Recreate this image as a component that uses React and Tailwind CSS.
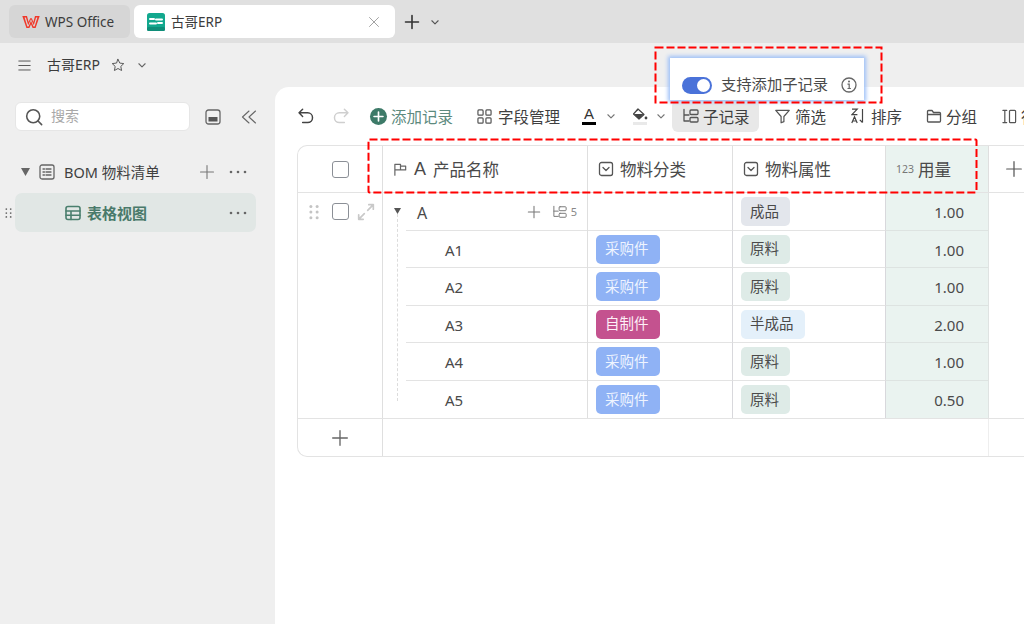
import { useState } from "react";

const FONT = "font-['Noto_Sans','Noto_Sans_CJK_SC',sans-serif]";

const rows = [
  { name: "A", kind: null, attr: "成品", attrClass: "bg-[#e3e6ec]", qty: "1.00", parent: true },
  { name: "A1", kind: "采购件", attr: "原料", attrClass: "bg-[#deebe7]", qty: "1.00" },
  { name: "A2", kind: "采购件", attr: "原料", attrClass: "bg-[#deebe7]", qty: "1.00" },
  { name: "A3", kind: "自制件", attr: "半成品", attrClass: "bg-[#e4f0fa]", qty: "2.00" },
  { name: "A4", kind: "采购件", attr: "原料", attrClass: "bg-[#deebe7]", qty: "1.00" },
  { name: "A5", kind: "采购件", attr: "原料", attrClass: "bg-[#deebe7]", qty: "0.50", last: true },
];

function Icon({ size = 16, children, className = "", stroke = "currentColor", sw = 1.3 }) {
  return (
    <svg width={size} height={size} viewBox="0 0 16 16" fill="none" stroke={stroke} strokeWidth={sw} strokeLinecap="round" strokeLinejoin="round" className={`shrink-0 ${className}`}>
      {children}
    </svg>
  );
}

const Plus = ({ size = 16, className = "", sw = 1.2 }) => (
  <Icon size={size} className={className} sw={sw}><path d="M8 1.5v13M1.5 8h13" /></Icon>
);
const Chevron = ({ size = 10, className = "" }) => (
  <Icon size={size} className={className} sw={1.8}><path d="M3 6l5 5 5-5" /></Icon>
);
const Dots = ({ className = "" }) => (
  <svg width="18" height="4" viewBox="0 0 18 4" className={`shrink-0 ${className}`} fill="currentColor">
    <circle cx="2" cy="2" r="1.3" /><circle cx="9" cy="2" r="1.3" /><circle cx="16" cy="2" r="1.3" />
  </svg>
);
const Grip = ({ className = "", r = 1.1, w = 8, h = 12 }) => (
  <svg width={w} height={h} viewBox="0 0 8 12" className={`shrink-0 ${className}`} fill="currentColor">
    {[1.5, 6, 10.5].map((y) => (
      <g key={y}><circle cx="1.5" cy={y} r={r} /><circle cx="6.5" cy={y} r={r} /></g>
    ))}
  </svg>
);
const SubRecord = ({ size = 16, className = "", sw = 1.3 }) => (
  <Icon size={size} className={className} sw={sw}>
    <path d="M1 1.5v11.5h5M1 7h5" />
    <rect x="7" y="2" width="8" height="4.5" rx="1" />
    <rect x="7" y="9.5" width="8" height="4.5" rx="1" />
  </Icon>
);
const SelectBox = () => (
  <Icon size={16} className="text-[#555]" sw={1.3}>
    <rect x="1.5" y="1.5" width="13" height="13" rx="2" />
    <path d="M5 6.5l3 3 3-3" />
  </Icon>
);
const Check = () => <div className="w-[17px] h-[17px] rounded-[3px] border-[1.5px] border-[#8b8f96] bg-white shrink-0" />;

function Tag({ className, children }) {
  return <span className={`inline-flex items-center h-[29px] mt-[1px] pl-[9px] pr-[11px] rounded-[5px] text-[14.5px] ${className}`}>{children}</span>;
}

function ToolItem({ icon, label, className = "", textClass = "" }) {
  return (
    <div className={`flex items-center shrink-0 ${className}`}>
      {icon}
      <span className={`text-[15.5px] leading-none pt-[3px] whitespace-nowrap ${textClass}`}>{label}</span>
    </div>
  );
}

function Toolbar() {
  return (
    <div className="flex items-center h-[32px] mt-[13px] ml-[22px] text-[#3f3f3f]">
      <Icon size={18} className="text-[#444]" sw={1.3}>
        <path d="M5 2L1.8 5.2 5 8.4M2 5.2h7.5a4.3 4.3 0 010 8.6H5" />
      </Icon>
      <Icon size={18} className="ml-[17px] text-[#cfcfcf]" sw={1.3}>
        <path d="M11 2l3.2 3.2L11 8.4M14 5.2H6.5a4.3 4.3 0 000 8.6H11" />
      </Icon>
      <ToolItem
        className="ml-[20px]"
        textClass="text-[#5d8a7e] ml-[4px]"
        label="添加记录"
        icon={
          <div className="w-[17px] h-[17px] rounded-full bg-[#3d7a68] flex items-center justify-center text-white">
            <Plus size={11} sw={2.4} />
          </div>
        }
      />
      <ToolItem
        className="ml-[24px]"
        textClass="ml-[6px]"
        label="字段管理"
        icon={
          <Icon size={15} className="text-[#555]" sw={1.3}>
            <rect x="1" y="1" width="5.5" height="5.5" rx="1" /><rect x="9.5" y="1" width="5.5" height="5.5" rx="1" />
            <rect x="1" y="9.5" width="5.5" height="5.5" rx="1" /><rect x="9.5" y="9.5" width="5.5" height="5.5" rx="1" />
          </Icon>
        }
      />
      <div className="ml-[22px] w-[14px] flex flex-col items-center shrink-0">
        <span className="text-[15px] leading-[14px] font-['Liberation_Sans',sans-serif] text-[#333]">A</span>
        <div className="w-[14px] h-[3px] bg-black mt-[1px]" />
      </div>
      <Chevron className="ml-[10px] text-[#777]" />
      <div className="ml-[16px] w-[16px] flex flex-col items-center shrink-0">
        <svg width="16" height="13" viewBox="0 0 16 13" className="shrink-0">
          <path d="M6 1l6 5.5-5 4.5-5.5-5z" fill="#fff" stroke="#444" strokeWidth="1.2" strokeLinejoin="round" />
          <path d="M2 6h9.5L7 11z" fill="#444" />
          <path d="M6 1L4.5 3" stroke="#444" strokeWidth="1.2" />
          <circle cx="14" cy="10" r="1.4" fill="#444" />
        </svg>
        <div className="w-[14px] h-[3px] bg-[#e9e9e9] mt-[1px]" />
      </div>
      <Chevron className="ml-[8px] text-[#777]" />
      <div className="ml-[6px] w-[87px] h-[32px] shrink-0 rounded-[6px] bg-[#e8e8e8] flex items-center pl-[11px]">
        <SubRecord size={16} className="text-[#555]" />
        <span className="ml-[4px] text-[15.5px] leading-none pt-[3px] whitespace-nowrap">子记录</span>
      </div>
      <ToolItem
        className="ml-[16px]"
        textClass="ml-[5px]"
        label="筛选"
        icon={<Icon size={15} className="text-[#555]"><path d="M0.8 1.5h14.4L9.5 8v5.5l-3 1.2V8z" /></Icon>}
      />
      <ToolItem
        className="ml-[25px]"
        textClass="ml-[5px]"
        label="排序"
        icon={
          <svg width="15" height="16" viewBox="0 0 15 16" className="shrink-0 text-[#444]" fill="none" stroke="currentColor" strokeWidth="1.2">
            <path d="M1 1.2h5.2L1 6.6h5.4M0.8 15l2.7-6.3L6.2 15M1.8 13h3.4M11.5 1v13.5M11.5 14.5L8.8 11.8" />
          </svg>
        }
      />
      <ToolItem
        className="ml-[24px]"
        textClass="ml-[4px]"
        label="分组"
        icon={
          <Icon size={16} className="text-[#555]"><path d="M1.5 3.5a1 1 0 011-1h3.5l1.5 2h6a1 1 0 011 1v7.5a1 1 0 01-1 1h-11a1 1 0 01-1-1zM1.5 6.5h13" /></Icon>
        }
      />
      <ToolItem
        className="ml-[25px]"
        textClass="ml-[4px]"
        label="行高"
        icon={
          <Icon size={15} className="text-[#555]"><path d="M1 1.5h4M1 14.5h4M3 1.5v13" /><rect x="8" y="1.5" width="6.5" height="13" rx="1" /></Icon>
        }
      />
    </div>
  );
}

function TableHeader() {
  const cell = "flex items-center border-r border-[#dfdfdf] text-[16.5px] text-[#4a4a4a]";
  return (
    <div className="grid grid-cols-[85px_205px_145px_153px_103px_1fr] h-[47px] border-b border-[#e3e3e3]">
      <div className={`${cell} justify-center`}><Check /></div>
      <div className={`${cell} pl-[10px]`}>
        <Icon size={15} className="text-[#666]" sw={1.3}>
          <path d="M2 14V2.5h6v6H2M8 4.5h5.5v4H8" />
        </Icon>
        <span className="ml-[6px] text-[18px] leading-none font-['Liberation_Sans',sans-serif]">A</span>
        <span className="ml-[7px] leading-none pt-[2px]">产品名称</span>
      </div>
      <div className={`${cell} pl-[10px]`}><SelectBox /><span className="ml-[6px] leading-none pt-[2px]">物料分类</span></div>
      <div className={`${cell} pl-[10px]`}><SelectBox /><span className="ml-[6px] leading-none pt-[2px]">物料属性</span></div>
      <div className={`${cell} pl-[10px] bg-[#eaf3f0]`}>
        <span className="text-[10.5px] text-[#777] leading-none">123</span>
        <span className="ml-[4px] leading-none pt-[2px]">用量</span>
      </div>
      <div className="flex items-center pl-[16px]"><Plus size={18} className="text-[#555]" sw={1.1} /></div>
    </div>
  );
}

function TableRow({ row }) {
  return (
    <div className="grid grid-cols-[85px_205px_145px_153px_103px_1fr] h-[37.5px] text-[15px] text-[#4a4a4a]">
      <div className="border-r border-[#dfdfdf] flex items-center pl-[11px] relative">
        {row.parent && (
          <>
            <Grip className="text-[#c4c4c4]" w={10} h={16} r={1.2} />
            <div className="ml-[13px]"><Check /></div>
            <Icon size={18} className="ml-[8px] text-[#c9c9c9]" sw={1.5}>
              <path d="M9.5 6.5L14.5 1.5M10.5 1.5h4v4M6.5 9.5L1.5 14.5M1.5 10.5v4h4" />
            </Icon>
          </>
        )}
      </div>
      <div className={`flex items-center border-r border-[#dfdfdf] relative ${row.parent ? "pl-[34px]" : "pl-[62px]"}`}>
        {row.parent && (
          <svg width="7" height="6" viewBox="0 0 7 6" className="absolute left-[11px] top-[15px]" fill="#555">
            <path d="M0 0h7L3.5 6z" />
          </svg>
        )}
        <span className={`leading-none pt-[2px] ${row.parent ? "text-[16px]" : ""}`}>{row.name}</span>
        {row.parent && (
          <>
            <Plus size={14} className="ml-auto text-[#777]" />
            <SubRecord size={14} className="ml-[12px] text-[#777]" sw={1.1} />
            <span className="ml-[4px] mr-[10px] text-[11px] text-[#888] leading-none">5</span>
          </>
        )}
        {!row.last && <div className="absolute left-[23px] right-0 bottom-0 h-px bg-[#e3e3e3]" />}
      </div>
      <div className={`flex items-center border-r border-[#d8d8dc] pl-[8px] ${row.last ? "" : "border-b border-b-[#e3e3e3]"}`}>
        {row.kind && (
          <Tag className={row.kind === "自制件" ? "bg-[#c4528f] text-[#fdf0f7]" : "bg-[#8fb2f5] text-[#eef4ff]"}>{row.kind}</Tag>
        )}
      </div>
      <div className={`flex items-center border-r border-[#d8d8dc] pl-[8px] ${row.last ? "" : "border-b border-b-[#e3e3e3]"}`}>
        <Tag className={`${row.attrClass} text-[#4a4a4a]`}>{row.attr}</Tag>
      </div>
      <div className={`flex items-center justify-end pr-[24px] bg-[#eaf3f0] border-r border-[#dfe3e2] ${row.last ? "" : "border-b border-b-[#dde3e1]"}`}>
        <span className="leading-none pt-[3px]">{row.qty}</span>
      </div>
    </div>
  );
}

function Table() {
  return (
    <div className="relative mt-[13px] ml-[22px] border-l border-t border-b border-[#e3e3e3] rounded-l-[10px] h-[312px] overflow-hidden">
      <TableHeader />
      {rows.map((row) => <TableRow key={row.name} row={row} />)}
      <div className="grid grid-cols-[85px_606px_1fr] h-[38px] border-t border-[#e3e3e3]">
        <div className="border-r border-[#dfdfdf] flex items-center justify-center text-[#666]"><Plus size={18} sw={1.2} /></div>
        <div className="border-r border-[#eeeeee]" />
      </div>
      <div className="absolute left-[99px] top-[68px] h-[187px] border-l border-dashed border-[#dcdcdc]" />
    </div>
  );
}

function Sidebar() {
  return (
    <div className="w-[275px] shrink-0 pl-[15px] pt-[15px]">
      <div className="flex items-center">
        <div className="w-[175px] h-[29px] bg-white rounded-[6px] border border-[#e6e6e6] flex items-center pl-[9px]">
          <Icon size={18} className="text-[#555]" sw={1.4}><circle cx="7.3" cy="7.3" r="5.8" /><path d="M11.6 11.6l3.2 3.2" /></Icon>
          <span className="ml-[8px] text-[14px] text-[#a8a8a8] leading-none pb-[1px]">搜索</span>
        </div>
        <svg width="16" height="16" viewBox="0 0 16 16" className="ml-[15px] shrink-0">
          <rect x="1" y="1" width="14" height="14" rx="2.5" fill="none" stroke="#666" strokeWidth="1.3" />
          <rect x="3.5" y="8" width="9" height="4.5" fill="#555" />
        </svg>
        <Icon size={16} className="ml-[20px] text-[#666]" sw={1.1}><path d="M8 2L1.5 8 8 14M14.5 2L8 8l6.5 6" /></Icon>
      </div>
      <div className="flex items-center h-[38px] mt-[22px] pl-[6px] text-[#3f3f3f]">
        <svg width="9" height="8" viewBox="0 0 9 8" fill="#666" className="shrink-0"><path d="M0 0h9L4.5 8z" /></svg>
        <Icon size={16} className="ml-[9px] text-[#666]" sw={1.3}>
          <rect x="1" y="1" width="14" height="14" rx="2" /><path d="M4 5h1.5M7 5h5M4 8h1.5M7 8h5M4 11h1.5M7 11h5" />
        </Icon>
        <span className="ml-[9px] text-[14.5px] leading-none">BOM 物料清单</span>
        <Plus size={16} className="ml-auto text-[#777]" sw={1.1} />
        <Dots className="ml-[14px] mr-[28px] text-[#666]" />
      </div>
      <div className="relative flex items-center w-[241px] h-[39px] mt-[2px] bg-[#e1e7e5] rounded-[7px] pl-[50px]">
        <Grip className="absolute left-[-10px] top-[14px] text-[#666]" w={7} h={12} r={1} />
        <Icon size={16} className="text-[#4a7f6e]" sw={1.6}>
          <rect x="1" y="1.5" width="14" height="13" rx="2" /><path d="M1 6h14M1 10.3h14M6 6v8.5" />
        </Icon>
        <span className="ml-[6px] text-[15px] font-bold text-[#4a7a6b] leading-none pt-[2px]">表格视图</span>
        <Dots className="ml-auto mr-[9px] text-[#666]" />
      </div>
    </div>
  );
}

export default function App() {
  const [on] = useState(true);
  return (
    <div className={`relative w-screen h-screen overflow-hidden bg-[#efefef] ${FONT}`}>
      {/* tab bar */}
      <div className="flex items-center h-[43px] bg-[#e0e0e0] pl-[9px] pb-[5px] pt-[5px] text-[13.5px] text-[#3c3c3c]">
        <div className="flex items-center w-[121px] h-[33px] rounded-[6px] bg-[#d6d6d6] pl-[13px]">
          <svg width="18" height="14" viewBox="0 0 18 14" className="shrink-0">
            <path d="M0.3 1H5L6.6 7 8.2 3.3H9.8L11.4 7 13 1H17.7L13.6 13H10.6L9 9.2 7.4 13H4.4zM2.6 2.4L5.4 11.6H6.5L9 5.8 11.5 11.6H12.6L15.4 2.4H14.1L11.8 10.2 9 4.2 6.2 10.2 3.9 2.4z" fill="#f0392b" fillRule="evenodd" />
          </svg>
          <span className="ml-[5px] leading-none pt-[2px]">WPS Office</span>
        </div>
        <div className="flex items-center w-[261px] h-[33px] rounded-[6px] bg-white ml-[4px] pl-[13px]">
          <svg width="18" height="18" viewBox="0 0 18 18" className="shrink-0">
            <rect width="18" height="18" rx="2.5" fill="#12a88e" />
            <path d="M3 6h4M9 6.5h6M3 10.5h6M11 10h4" stroke="#fff" strokeWidth="2" strokeLinecap="round" />
            <rect y="14" width="18" height="4" rx="1.5" fill="#0f8d78" />
          </svg>
          <span className="ml-[6px] leading-none pt-[2px]">古哥ERP</span>
          <Icon size={12} className="ml-auto mr-[15px] text-[#999]" sw={1.2}><path d="M2 2l12 12M14 2L2 14" /></Icon>
        </div>
        <Plus size={16} className="ml-[9px] text-[#333]" sw={1.6} />
        <Chevron className="ml-[10px] text-[#555]" />
      </div>
      {/* title bar */}
      <div className="flex items-center h-[44px] pl-[18px] text-[#3c3c3c]">
        <Icon size={13} className="text-[#555]" sw={1.2}><path d="M1 2.5h14M1 8h14M1 13.5h14" /></Icon>
        <span className="ml-[16px] text-[14px] leading-none">古哥ERP</span>
        <Icon size={14} className="ml-[11px] text-[#555]" sw={1.1}>
          <path d="M8 1.5l2 4.3 4.6.6-3.4 3.2.9 4.7L8 12l-4.1 2.3.9-4.7L1.4 6.4 6 5.8z" />
        </Icon>
        <Chevron className="ml-[12px] text-[#666]" />
      </div>
      <div className="flex h-[537px]">
        <Sidebar />
        <div className="flex-1 min-w-0 bg-white rounded-tl-[14px] overflow-hidden">
          <Toolbar />
          <Table />
        </div>
      </div>

      {/* popup */}
      <div className="absolute left-[670px] top-[58px] w-[194px] h-[42px] bg-white shadow-[0_0_4px_2px_#9dc0f8] flex items-center pl-[12px] pt-[12px] text-[#4a4a4a]">
        <div className={`w-[30px] h-[17px] rounded-full bg-[#4a72d9] relative shrink-0 ${on ? "" : "opacity-50"}`}>
          <div className="absolute right-[2px] top-[2px] w-[13px] h-[13px] rounded-full bg-white" />
        </div>
        <span className="ml-[9px] text-[15.3px] leading-none whitespace-nowrap">支持添加子记录</span>
        <svg width="16" height="16" viewBox="0 0 16 16" className="ml-[13px] shrink-0 text-[#666]" fill="none" stroke="currentColor">
          <circle cx="8" cy="8" r="7" strokeWidth="1.3" />
          <circle cx="8" cy="4.6" r="1" fill="currentColor" stroke="none" />
          <path d="M6.5 7.2H8.2V11.5M6.5 11.5h3.4" strokeWidth="1.2" />
        </svg>
      </div>

      {/* red dashed annotation boxes */}
      <svg width="229" height="58" className="absolute left-[654px] top-[46px] pointer-events-none">
        <rect x="1.5" y="1.5" width="226" height="55" fill="none" stroke="#ff0000" strokeWidth="2" strokeDasharray="8 3" />
      </svg>
      <svg width="611" height="56" className="absolute left-[367px] top-[138px] pointer-events-none">
        <rect x="1.5" y="1.5" width="608" height="53" rx="1" fill="none" stroke="#ff0000" strokeWidth="2" strokeDasharray="8 3" />
      </svg>
    </div>
  );
}
